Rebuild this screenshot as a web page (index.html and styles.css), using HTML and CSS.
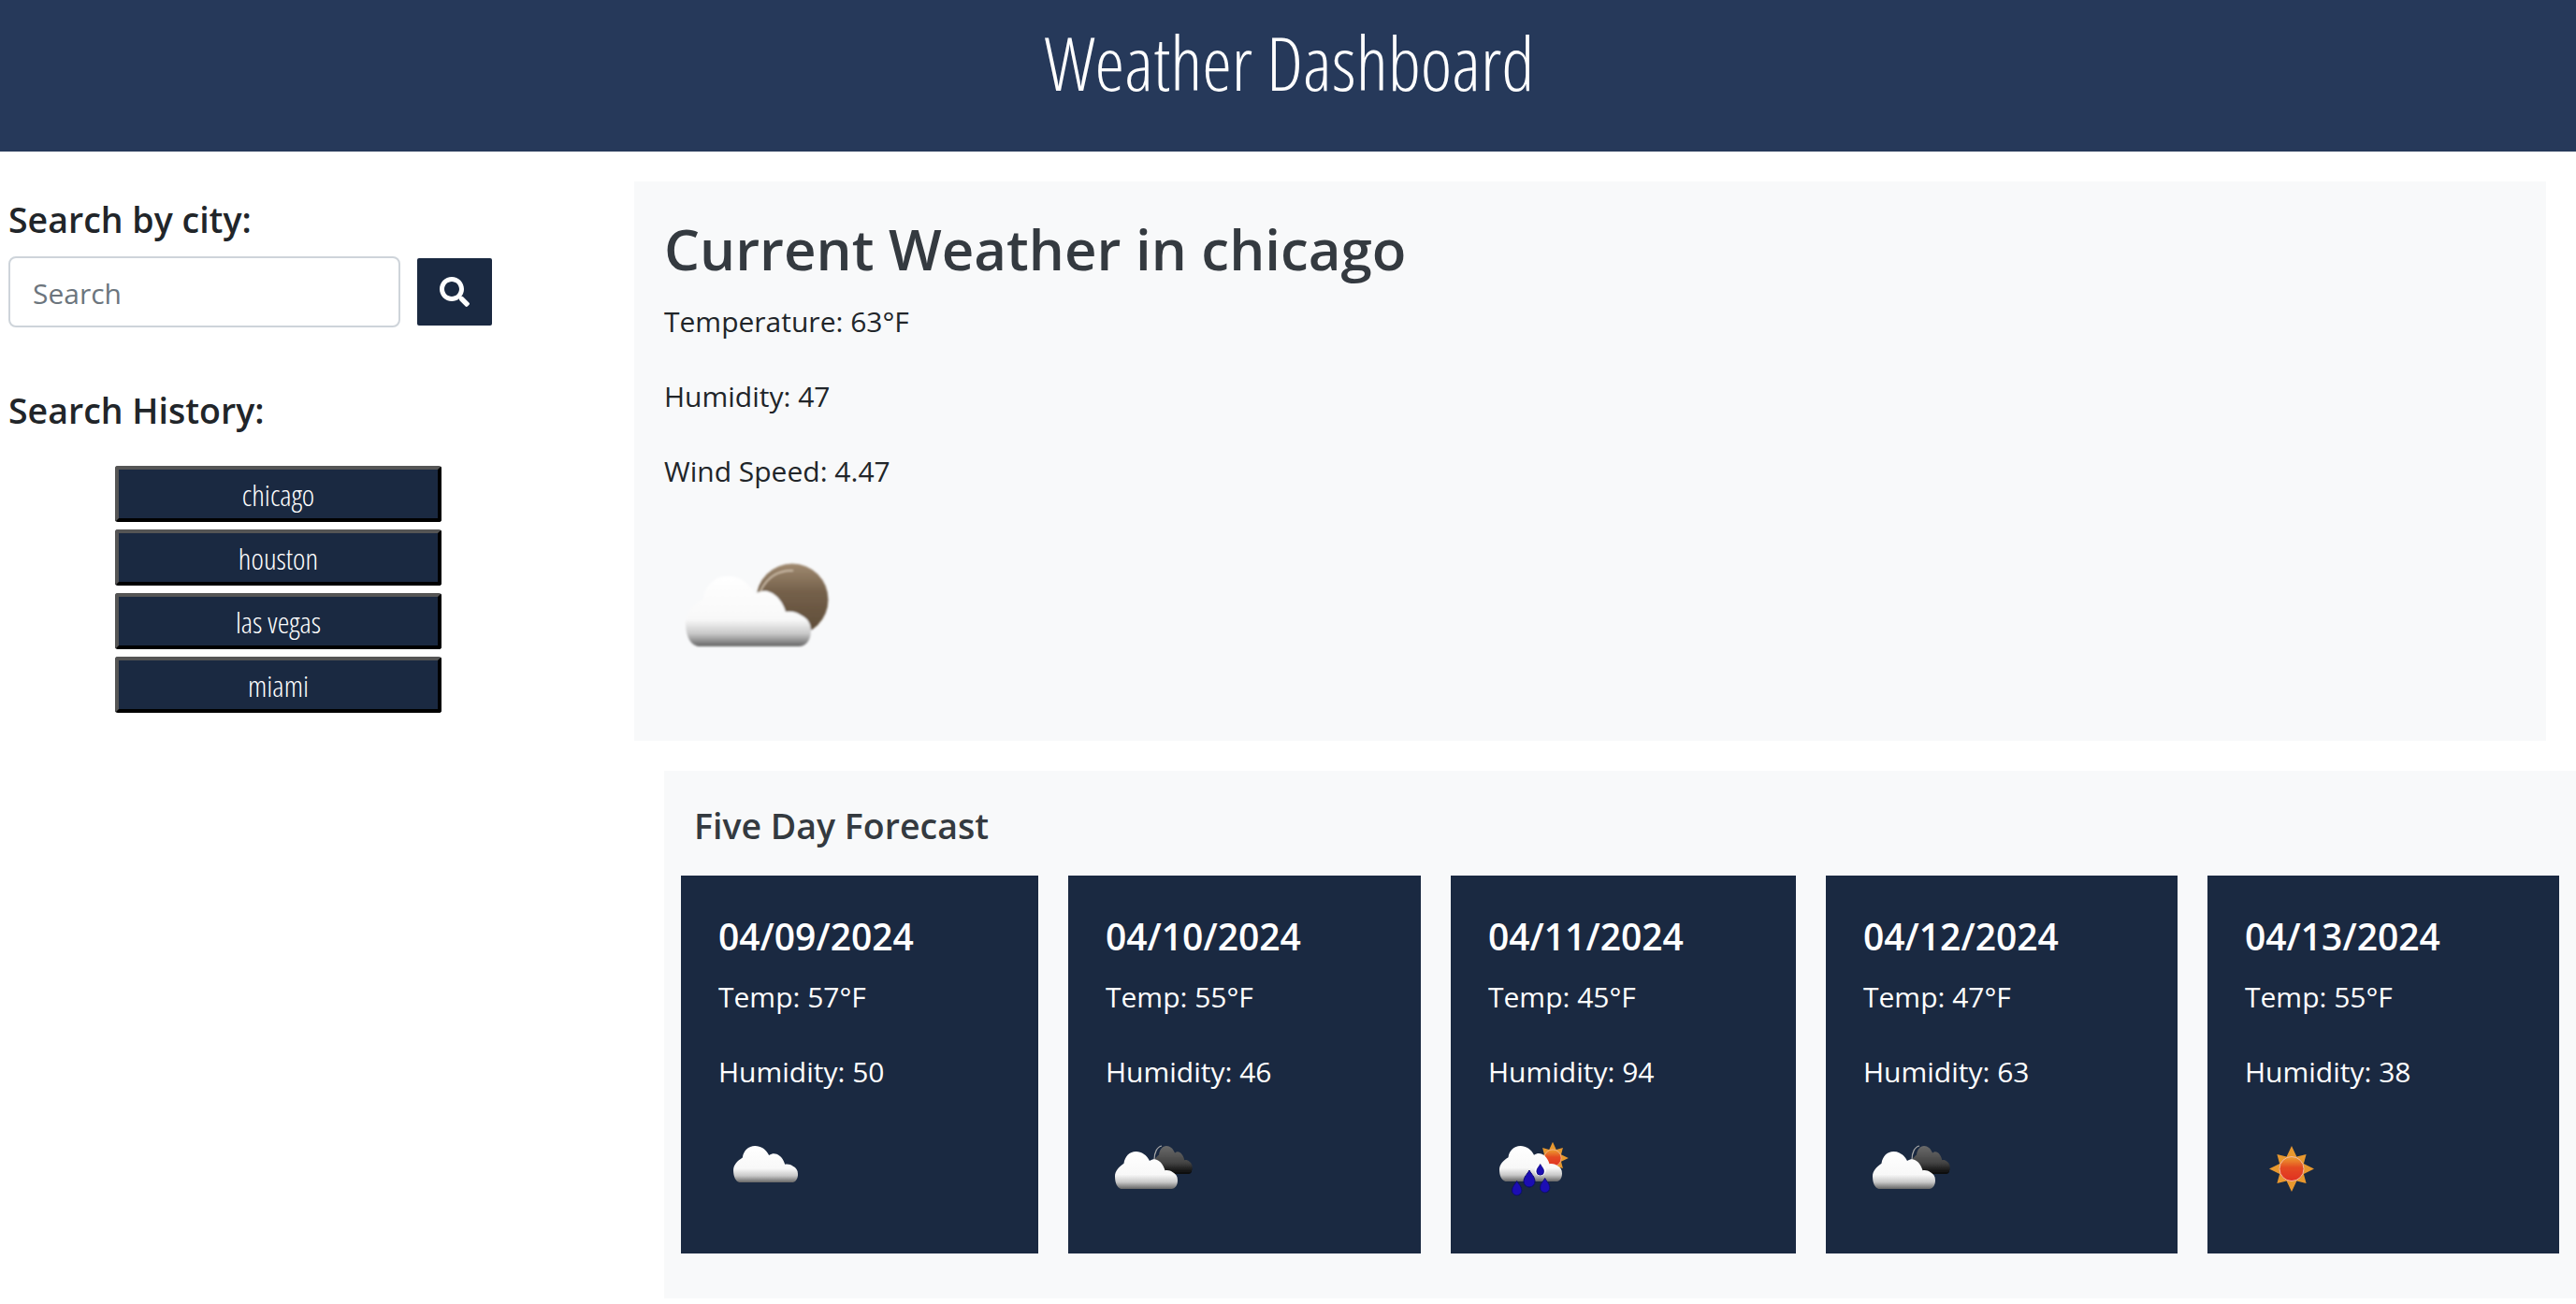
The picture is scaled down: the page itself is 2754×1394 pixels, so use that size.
FILE: index.html
```html
<!DOCTYPE html>
<html lang="en">
<head>
    <meta charset="UTF-8">
    <title>Weather Dashboard</title>
    <link rel="stylesheet" href="styles.css">
</head>
<body>
    <svg class="defs" width="0" height="0" aria-hidden="true">
        <defs>
            <linearGradient id="cloudWhite" x1="0" y1="0" x2="0" y2="1">
                <stop offset="0" stop-color="#ffffff"/>
                <stop offset="0.62" stop-color="#f8f8f8"/>
                <stop offset="0.82" stop-color="#c8c8c8"/>
                <stop offset="1" stop-color="#666666"/>
            </linearGradient>
            <linearGradient id="cloudDark" x1="0" y1="0" x2="0" y2="1">
                <stop offset="0" stop-color="#6a6a6a"/>
                <stop offset="0.6" stop-color="#444444"/>
                <stop offset="1" stop-color="#050505"/>
            </linearGradient>
            <linearGradient id="moon" x1="0" y1="0" x2="0" y2="1">
                <stop offset="0" stop-color="#a08a70"/>
                <stop offset="0.4" stop-color="#74604a"/>
                <stop offset="1" stop-color="#5c4a36"/>
            </linearGradient>
            <linearGradient id="sunCore" x1="0" y1="0" x2="0" y2="1">
                <stop offset="0" stop-color="#eda030"/>
                <stop offset="0.45" stop-color="#e44a22"/>
                <stop offset="1" stop-color="#e03020"/>
            </linearGradient>
            <filter id="soft"><feGaussianBlur stdDeviation="0.5"/></filter>
            <filter id="softBig"><feGaussianBlur stdDeviation="1"/></filter>
            <path id="cloudShape" d="M36 131C27 129 23 118 23 106C23 95 31 87 42 80C44 66 54 56 68 56C80 56 91 63 97 75C103 71 109 71 113 73C121 76 127 84 130 94C136 93 142 94 147 98C153 101 157 106 157 114C157 124 152 131 144 131Z"/>
            <g id="sunShape">
                <polygon points="0,-24.500 5.400,-12.900 15.600,-15.600 12.900,-5.400 24,0 12.900,5.400 15.600,15.600 5.400,12.900 0,24.500 -5.400,12.900 -15.600,15.600 -12.900,5.400 -24,0 -12.900,-5.400 -15.600,-15.600 -5.400,-12.900" fill="#e8982f"/>
                <circle r="13" fill="url(#sunCore)" stroke="#f2b8a4" stroke-width="1"/>
            </g>
            <path id="dropShape" d="M0-10C2-6 6-3 6 2A6 6 0 1 1-6 2C-6-3-2-6 0-10Z" fill="#1a0ab4" stroke="#0c0a70" stroke-width="1"/>
            <g id="brokenClouds">
                <use href="#cloudShape" transform="translate(44 2.600) scale(.31 .4)" fill="url(#cloudDark)"/>
                <path d="M52 40C52 32 55 26 60 25" fill="none" stroke="#aaa" stroke-width="1.200"/>
                <use href="#cloudShape" transform="translate(-1.500 1.100) scale(.5 .533)" fill="url(#cloudWhite)"/>
            </g>
        </defs>
    </svg>

    <header class="topBar">
        <h1>Weather Dashboard</h1>
    </header>

    <div class="layout">
        <aside class="sidebar">
            <h2 class="sideTitle">Search by city:</h2>
            <form class="searchForm">
                <input class="searchInput" type="text" placeholder="Search">
                <button class="searchBtn" type="button" aria-label="Search">
                    <svg viewBox="0 0 512 512" width="32" height="32"><path fill="#fff" d="M505 442.700L405.300 343c-4.500-4.500-10.600-7-17-7H372c27.600-35.300 44-79.700 44-128C416 93.100 322.900 0 208 0S0 93.100 0 208s93.100 208 208 208c48.300 0 92.700-16.400 128-44v16.300c0 6.400 2.500 12.500 7 17l99.700 99.700c9.400 9.400 24.600 9.400 33.900 0l28.300-28.300c9.400-9.400 9.400-24.600.1-34zM208 336c-70.700 0-128-57.200-128-128 0-70.700 57.200-128 128-128 70.700 0 128 57.200 128 128 0 70.700-57.200 128-128 128z"/></svg>
                </button>
            </form>
            <h2 class="sideTitle historyTitle">Search History:</h2>
            <div class="history">
                <button class="historyBtn">chicago</button>
                <button class="historyBtn">houston</button>
                <button class="historyBtn">las vegas</button>
                <button class="historyBtn">miami</button>
            </div>
        </aside>

        <main class="content">
            <section class="current">
                <h2 class="currentTitle">Current Weather in chicago</h2>
                <p>Temperature: 63°F</p>
                <p>Humidity: 47</p>
                <p>Wind Speed: 4.47</p>
                <svg class="currentIcon" viewBox="0 0 200 200" width="200" height="200">
                    <g filter="url(#softBig)">
                        <circle cx="137" cy="81" r="38.500" fill="url(#moon)"/>
                        <path d="M103 72C110 56 124 49 138 50" fill="none" stroke="#d8c8b4" stroke-width="1.500"/>
                        <use href="#cloudShape" fill="url(#cloudWhite)"/>
                    </g>
                </svg>
            </section>

            <section class="forecast">
                <h3 class="forecastTitle">Five Day Forecast</h3>
                <div class="cards">
                    <article class="card card1">
                        <h4>04/09/2024</h4>
                        <p>Temp: 57°F</p>
                        <p>Humidity: 50</p>
                        <svg class="cardIcon" viewBox="0 0 100 100" width="100" height="100">
                            <g filter="url(#soft)">
                                <use href="#cloudShape" transform="translate(4.200 -4.100) scale(.515 .52)" fill="url(#cloudWhite)"/>
                            </g>
                        </svg>
                    </article>
                    <article class="card card2">
                        <h4>04/10/2024</h4>
                        <p>Temp: 55°F</p>
                        <p>Humidity: 46</p>
                        <svg class="cardIcon" viewBox="0 0 100 100" width="100" height="100">
                            <use href="#brokenClouds" filter="url(#soft)"/>
                        </svg>
                    </article>
                    <article class="card card3">
                        <h4>04/11/2024</h4>
                        <p>Temp: 45°F</p>
                        <p>Humidity: 94</p>
                        <svg class="cardIcon" viewBox="0 0 100 100" width="100" height="100">
                            <g filter="url(#soft)">
                                <use href="#sunShape" transform="translate(69 38) scale(.7)"/>
                                <use href="#cloudShape" transform="translate(.5 -3.400) scale(.5 .507)" fill="url(#cloudWhite)"/>
                                <circle cx="55.700" cy="51" r="6" fill="#fff"/>
                                <use href="#dropShape" transform="translate(30.700 71) scale(.85)"/>
                                <use href="#dropShape" transform="translate(44 61) scale(1)"/>
                                <use href="#dropShape" transform="translate(60.700 68) scale(.85)"/>
                                <use href="#dropShape" transform="translate(55.700 51) scale(.65)"/>
                            </g>
                        </svg>
                    </article>
                    <article class="card card4">
                        <h4>04/12/2024</h4>
                        <p>Temp: 47°F</p>
                        <p>Humidity: 63</p>
                        <svg class="cardIcon" viewBox="0 0 100 100" width="100" height="100">
                            <use href="#brokenClouds" filter="url(#soft)"/>
                        </svg>
                    </article>
                    <article class="card card5">
                        <h4>04/13/2024</h4>
                        <p>Temp: 55°F</p>
                        <p>Humidity: 38</p>
                        <svg class="cardIcon" viewBox="0 0 100 100" width="100" height="100">
                            <use href="#sunShape" transform="translate(50 49.500)" filter="url(#soft)"/>
                        </svg>
                    </article>
                </div>
            </section>
        </main>
    </div>
</body>
</html>
```
FILE: styles.css
```css
* {
    box-sizing: border-box;
}
body {
    margin: 0;
    font-family: "Open Sans", "Noto Sans", sans-serif;
    color: #212529;
    background-color: #fff;
    overflow-x: hidden;
}
.defs {
    position: absolute;
}

.topBar {
    height: 162px;
    padding: 0 0 31px 3px;
    background-color: #26395a;
    display: flex;
    align-items: center;
    justify-content: center;
}
.topBar h1 {
    margin: 0;
    color: #fff;
    font-size: 80px;
    font-weight: 300;
    font-stretch: 75%;
}

.layout {
    display: flex;
    align-items: flex-start;
}
.sidebar {
    width: 678px;
    padding: 49px 0 0 9px;
}
.sideTitle {
    margin: 0;
    font-size: 37.5px;
    font-weight: 600;
    line-height: 48px;
}
.searchForm {
    display: flex;
    align-items: center;
    margin-top: 15px;
}
.searchInput {
    width: 419px;
    height: 76px;
    padding: 2px 24px 0;
    border: 2px solid #ced4da;
    border-radius: 8px;
    font: 30px "Open Sans", sans-serif;
    color: #495057;
}
.searchInput::placeholder {
    color: #6c757d;
}
.searchBtn {
    width: 80px;
    height: 72px;
    margin-left: 18px;
    border: 0;
    border-radius: 2px;
    background-color: #1a2941;
    display: flex;
    align-items: center;
    justify-content: center;
}
.historyTitle {
    margin-top: 65px;
}
.history {
    display: flex;
    flex-direction: column;
    gap: 8px;
    width: 349px;
    margin: 35px 0 0 114px;
}
.historyBtn {
    height: 60px;
    border: 4px solid;
    border-color: #555 #000 #000 #555;
    border-radius: 3px;
    background-color: #1a2941;
    color: #fff;
    font-family: "Open Sans", sans-serif;
    font-size: 32px;
    font-weight: 300;
    font-stretch: 75%;
}

.content {
    flex: 1;
    min-width: 0;
    padding-top: 32px;
}
.current {
    width: 2044px;
    height: 598px;
    padding: 32px;
    background-color: #f8f9fa;
}
.currentTitle {
    margin: 0 0 14px;
    font-size: 60px;
    font-weight: 600;
    line-height: 80px;
    color: #343a40;
}
.current p {
    margin: 0 0 32px;
    font-size: 30px;
    line-height: 48px;
}
.currentIcon {
    display: block;
}
.forecast {
    margin: 32px 0 0 32px;
    padding: 32px 0 48px;
    background-color: #f8f9fa;
}
.forecastTitle {
    margin: 0 0 0 32px;
    font-size: 37.5px;
    font-weight: 600;
    line-height: 54px;
    color: #343a40;
}
.cards {
    display: flex;
    margin: 26px 0 0 18px;
}
.card {
    height: 404px;
    padding: 40px;
    background-color: #1a2941;
    color: #fff;
}
.card1 { width: 382px; margin-right: 32px; }
.card2 { width: 377px; margin-right: 32px; }
.card3 { width: 369px; margin-right: 32px; }
.card4 { width: 376px; margin-right: 32px; }
.card5 { width: 376px; }
.card h4 {
    margin: 0 0 16px;
    font-size: 39px;
    font-weight: 600;
    line-height: 50px;
}
.card p {
    margin: 0 0 32px;
    font-size: 30px;
    line-height: 48px;
}
.cardIcon {
    display: block;
    margin-top: -2px;
}
```
